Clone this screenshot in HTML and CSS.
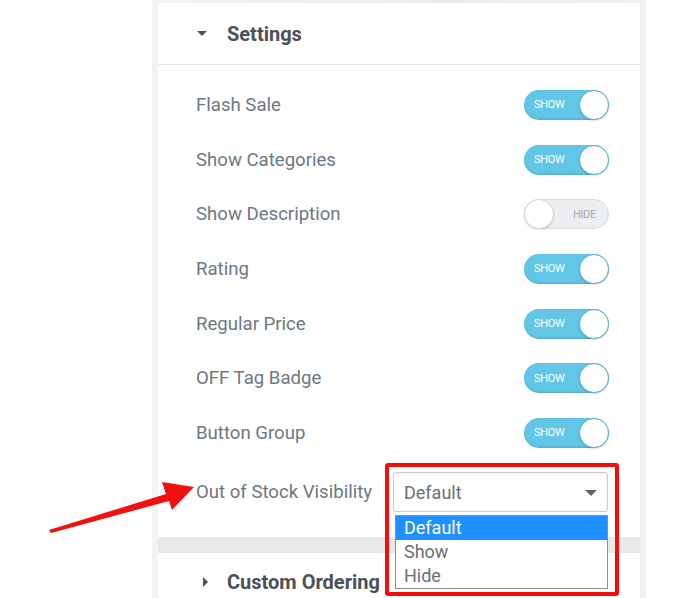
FILE: index.html
```html
<!DOCTYPE html>
<html lang="en">
<head>
<meta charset="utf-8">
<title>Settings</title>
<link rel="stylesheet" href="styles.css">
</head>
<body>
<div class="stage">
  <div class="frame">
    <section class="panel panel-settings">
      <div class="panel-head">
        <span class="caret caret-down"></span>
        <h2 class="panel-title">Settings</h2>
      </div>
      <div class="rows">
        <div class="row"><span class="label">Flash Sale</span><span class="toggle on"><span class="toggle-text">SHOW</span><span class="knob"></span></span></div>
        <div class="row"><span class="label">Show Categories</span><span class="toggle on"><span class="toggle-text">SHOW</span><span class="knob"></span></span></div>
        <div class="row"><span class="label">Show Description</span><span class="toggle off"><span class="knob"></span><span class="toggle-text">HIDE</span></span></div>
        <div class="row"><span class="label">Rating</span><span class="toggle on"><span class="toggle-text">SHOW</span><span class="knob"></span></span></div>
        <div class="row"><span class="label">Regular Price</span><span class="toggle on"><span class="toggle-text">SHOW</span><span class="knob"></span></span></div>
        <div class="row"><span class="label">OFF Tag Badge</span><span class="toggle on"><span class="toggle-text">SHOW</span><span class="knob"></span></span></div>
        <div class="row"><span class="label">Button Group</span><span class="toggle on"><span class="toggle-text">SHOW</span><span class="knob"></span></span></div>
        <div class="row select-row">
          <span class="label">Out of Stock Visibility</span>
          <div class="select-wrap">
            <div class="select"><span>Default</span><span class="sel-caret"></span></div>
            <ul class="options">
              <li class="opt active">Default</li>
              <li class="opt">Show</li>
              <li class="opt">Hide</li>
            </ul>
            <div class="highlight-box"></div>
          </div>
        </div>
      </div>
    </section>
    <div class="band"></div>
    <section class="panel panel-next">
      <div class="panel-head next-head">
        <span class="caret caret-right"></span>
        <h2 class="panel-title">Custom Ordering</h2>
      </div>
    </section>
  </div>
  <svg class="arrow" width="688" height="598" viewBox="0 0 688 598">
    <polygon points="49,530 166,494 162,482 194,487 172,510 169,501 51,533" fill="#f20f0f"/>
  </svg>
</div>
</body>
</html>
```
FILE: styles.css
```css
html, body {
  margin: 0;
  padding: 0;
  background: #ffffff;
}
body {
  width: 688px;
  height: 598px;
  overflow: hidden;
  font-family: Roboto, "Liberation Sans", sans-serif;
}
.stage {
  position: relative;
  width: 688px;
  height: 598px;
}
.frame {
  margin-left: 152px;
  width: 494px;
  height: 598px;
  box-sizing: border-box;
  padding: 3px 6px 0;
  background: linear-gradient(to right, #f3f3f3, #ebebeb 60%, #f1f1f1);
  display: flex;
  flex-direction: column;
  overflow: hidden;
}
.panel {
  background: #ffffff;
  flex-shrink: 0;
}
.panel-head {
  height: 61px;
  border-bottom: 1px solid #e6e6e6;
  display: flex;
  align-items: center;
  padding-left: 39px;
}
.panel-title {
  margin: 0 0 0 20px;
  font-size: 20px;
  font-weight: 700;
  color: #4a5157;
}
.caret {
  width: 0;
  height: 0;
  display: inline-block;
}
.caret-down {
  border-left: 5px solid transparent;
  border-right: 5px solid transparent;
  border-top: 5px solid #4a5157;
}
.caret-right {
  border-top: 5px solid transparent;
  border-bottom: 5px solid transparent;
  border-left: 5px solid #4a5157;
  margin-left: 6px;
  margin-right: -1px;
}
.rows {
  padding: 12.67px 31px 25px 38px;
}
.row {
  height: 54.67px;
  display: flex;
  align-items: center;
  justify-content: space-between;
}
.label {
  font-size: 18.6px;
  color: #6d7882;
}
.toggle {
  width: 85px;
  height: 30px;
  border-radius: 15px;
  box-sizing: border-box;
  display: flex;
  align-items: center;
  justify-content: space-between;
}
.toggle.on {
  background: #62c6e6;
  box-shadow: inset 0 -1px 2px rgba(0, 0, 0, 0.15);
  padding-left: 10px;
}
.toggle.off {
  background: #eceeef;
  border: 1px solid #d9dbdd;
  padding-right: 12px;
}
.toggle-text {
  font-size: 11px;
  letter-spacing: -0.3px;
}
.toggle.on .toggle-text {
  color: #ffffff;
}
.toggle.off .toggle-text {
  color: #a8aaad;
}
.knob {
  width: 30px;
  height: 30px;
  border-radius: 50%;
  background: #ffffff;
  box-sizing: border-box;
  border: 1.5px solid #5ab3cf;
  box-shadow: 0 1px 2px rgba(0, 0, 0, 0.15);
}
.toggle.off .knob {
  border: 1px solid #d6d8da;
  width: 30px;
  height: 30px;
  margin-left: -1px;
}
.select-row {
  height: 40px;
  margin-top: 12px;
}
.select-wrap {
  position: relative;
  margin-right: 1px;
}
.select {
  width: 215px;
  height: 40px;
  box-sizing: border-box;
  border: 1px solid #c8ccd0;
  border-radius: 3px;
  display: flex;
  align-items: center;
  justify-content: space-between;
  padding: 0 10px 0 10px;
  font-size: 18px;
  color: #6b6f73;
  box-shadow: inset 0 1px 2px rgba(0, 0, 0, 0.05);
}
.sel-caret {
  width: 0;
  height: 0;
  border-left: 6px solid transparent;
  border-right: 6px solid transparent;
  border-top: 6px solid #5f6468;
  margin-top: 2px;
}
.options {
  position: absolute;
  left: 2px;
  top: 43px;
  width: 213px;
  margin: 0;
  padding: 0;
  list-style: none;
  background: #ffffff;
  border: 1px solid #8d8d8d;
  box-sizing: border-box;
}
.opt {
  height: 24px;
  line-height: 24px;
  padding-left: 8px;
  font-size: 18px;
  color: #6b6f73;
}
.opt.active {
  background: #1e90ff;
  color: #ffffff;
}
.highlight-box {
  position: absolute;
  left: -8px;
  top: -9px;
  width: 234px;
  height: 133px;
  box-sizing: border-box;
  border: 4px solid #f40c0c;
  border-radius: 3px;
}
.band {
  height: 16px;
  flex-shrink: 0;
  background: #e6e8ea;
}
.panel-next {
  flex: 1 0 auto;
}
.next-head {
  height: 58px;
  border-bottom: none;
}
.arrow {
  position: absolute;
  left: 0;
  top: 0;
  pointer-events: none;
}
```
